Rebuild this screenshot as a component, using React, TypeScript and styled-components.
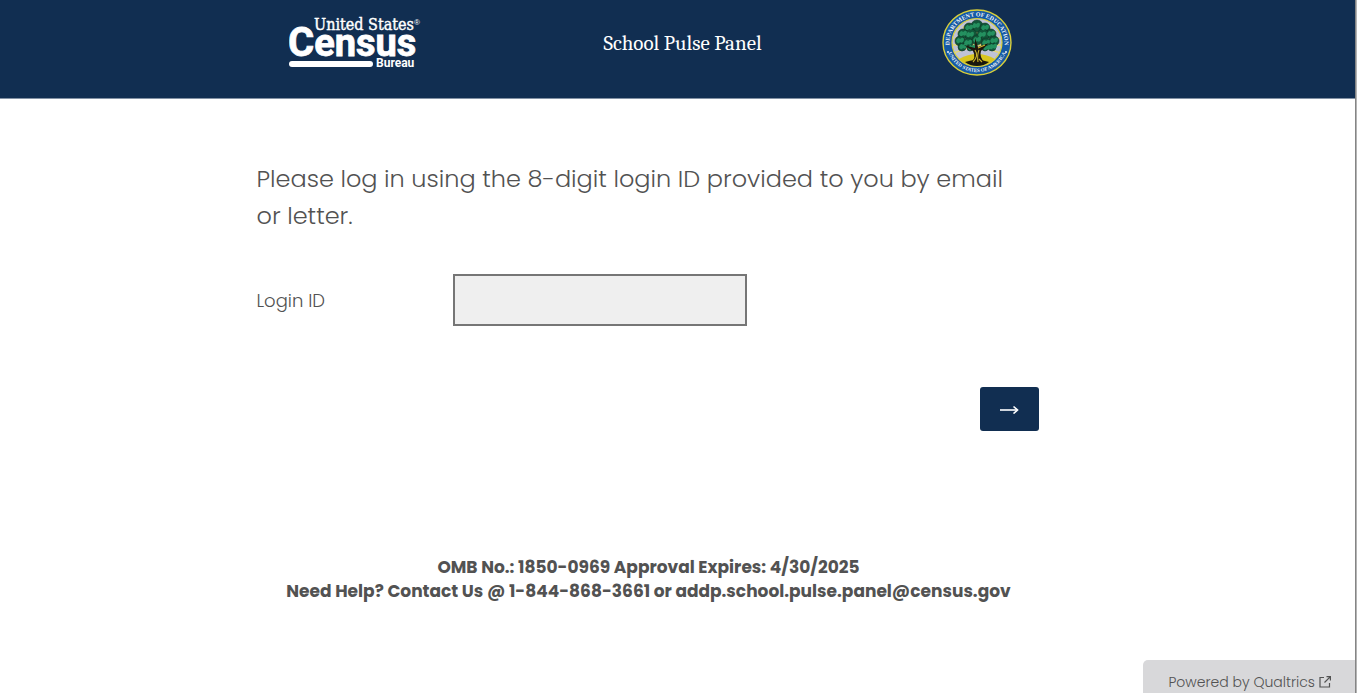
import React from "react";
import styled, { createGlobalStyle } from "styled-components";

const NAVY = "#112e51";
const INK = "#525252";

const GlobalStyle = createGlobalStyle`
  * { box-sizing: border-box; }
  body {
    margin: 0;
    background: #fff;
    color: ${INK};
    font-family: Poppins, Inter, "Open Sans", sans-serif;
    font-weight: 300;
  }
`;

const Page = styled.div`
  min-height: 100vh;
`;

const Header = styled.header`
  background: ${NAVY};
  border-bottom: 1px solid #8291a4;
  padding: 0 62px 0 0;
`;

const Column = styled.div`
  width: 100%;
  max-width: 782px;
  margin: 0 auto;
`;

const HeaderRow = styled(Column)`
  display: flex;
  justify-content: space-between;
  align-items: center;
  height: 98px;
  padding: 0 26px 12px 32px;
`;

const SiteTitle = styled.h1`
  margin: 0;
  color: #fff;
  font-family: Cambria, "Liberation Serif", serif;
  font-size: 21px;
  font-weight: 400;
  line-height: 24px;
`;

const Main = styled.main`
  padding: 61px 62px 0 0;
`;

const Question = styled.h2`
  margin: 0;
  padding-right: 24px;
  font-size: 24px;
  font-weight: 300;
  line-height: 37px;
`;

const Field = styled.div`
  display: flex;
  align-items: center;
  margin-top: 40px;
`;

const FieldLabel = styled.label`
  width: 196px;
  padding-top: 2px;
  font-size: 18px;
  line-height: 28px;
`;

const TextInput = styled.input`
  width: 294px;
  height: 52px;
  padding: 8px 12px;
  border: 2px solid #767676;
  border-radius: 0;
  background: #efefef;
  color: ${INK};
  font: inherit;
  font-size: 18px;
`;

const Actions = styled.div`
  display: flex;
  justify-content: flex-end;
  margin-top: 61px;
`;

const NextButton = styled.button`
  display: flex;
  align-items: center;
  justify-content: center;
  width: 59px;
  height: 44px;
  padding: 0;
  border: 0;
  border-radius: 3px;
  background: ${NAVY};
  color: #fff;
`;

const Contact = styled.footer`
  margin-top: 124px;
  padding: 0 0 80px 2px;
  text-align: center;
  font-size: 17px;
  font-weight: 700;
  line-height: 24px;

  p { margin: 0; }
`;

const PoweredBy = styled.a`
  position: fixed;
  right: 2px;
  bottom: 0;
  display: flex;
  align-items: center;
  gap: 4px;
  height: 33px;
  padding: 11px 24px 0 25px;
  border-top-left-radius: 5px;
  background: #d8d8da;
  color: ${INK};
  font-size: 14px;
  line-height: 20px;
  text-decoration: none;
`;

const EdgeBar = styled.div`
  position: fixed;
  top: 0;
  right: 0;
  bottom: 0;
  width: 2px;
  border-left: 1px solid #858585;
  background: #b4b4b4;
`;

function CensusLogo() {
  return (
    <svg width="134" height="56" viewBox="0 0 134 56" role="img" aria-label="United States Census Bureau" fill="#fff">
      <text x="25" y="15" fontFamily="DejaVu Serif Condensed, DejaVu Serif, serif" fontSize="16" stroke="#fff" strokeWidth="0.4">United States</text>
      <text x="125" y="10" fontFamily="Liberation Sans, sans-serif" fontSize="8">®</text>
      <text x="-1" y="41" fontFamily="Roboto, sans-serif" fontWeight="700" fontSize="38" stroke="#fff" strokeWidth="0.8">
        <tspan fontSize="40">C</tspan>ensus
      </text>
      <rect x="0" y="46" width="84" height="6" rx="3" />
      <text x="87" y="52" fontFamily="Roboto, sans-serif" fontWeight="700" fontSize="12">Bureau</text>
    </svg>
  );
}

const RAY_ANGLES = [0, 18, 36, 54, 72, 90, 108, 126, 144, 162, 180, 200, 340];

const LEAVES: [number, number, number][] = [
  [35, 17, 6], [27, 19, 5], [43, 19, 5], [21, 25, 5], [49, 25, 5],
  [29, 26, 6], [41, 26, 6], [18, 32, 5], [52, 32, 5], [26, 34, 5],
  [44, 34, 5], [35, 31, 5], [20, 38, 4], [50, 38, 4], [28, 39, 3], [43, 39, 3],
];

function EducationSeal() {
  return (
    <svg width="70" height="68" viewBox="0 0 70 68" role="img" aria-label="Department of Education, United States of America">
      <defs>
        <path id="sealTop" d="M8.5 41 A27.5 26.5 0 1 1 61.5 41" />
        <path id="sealBottom" d="M5.5 41 A30.5 29.5 0 0 0 64.5 41" />
      </defs>
      <ellipse cx="35" cy="33.5" rx="34" ry="32.5" fill="#1559a4" stroke="#d9cf3a" strokeWidth="1.4" />
      <ellipse cx="35" cy="33.5" rx="25" ry="24" fill="#bfc3d6" stroke="#d9cf3a" strokeWidth="1.2" />
      <g stroke="#e3d678" strokeWidth="1.6">
        {RAY_ANGLES.map((a) => {
          const t = (a * Math.PI) / 180;
          return <line key={a} x1="35" y1="36" x2={35 + 24 * Math.cos(t)} y2={36 - 23 * Math.sin(t)} />;
        })}
      </g>
      <path d="M17 50 Q35 40 53 50 Q46 57 35 57 Q24 57 17 50Z" fill="#d8c51e" />
      <path d="M23 53 Q35 49 47 53 Q42 57 35 57 Q28 57 23 53Z" fill="#18180e" />
      <g fill="#12573a" stroke="#0d3324" strokeWidth="0.6">
        {LEAVES.map(([x, y, r]) => <circle key={`${x}-${y}`} cx={x} cy={y} r={r} />)}
      </g>
      <g fill="#24905f">
        {LEAVES.map(([x, y, r]) => (
          <path key={`${x}-${y}`} d={`M${x - r + 1} ${y} q2 -5 4 -2 q4 -3 4 1 q-1 4 -4 2 q-2 3 -4 -1z`} />
        ))}
      </g>
      <path d="M28 54 Q35 49 31 42 L22 36 L33 39 L33 29 L36 38 L47 34 L39 42 Q37 48 43 54Z" fill="#1c160c" />
      <path d="M31 53 Q37 47 33 41 M36 53 Q35 46 37 41 M36 39 L43 36 M40 53 L37 50" fill="none" stroke="#cbb52a" strokeWidth="1.1" />
      <g fill="#eef2f8" fontFamily="Liberation Serif, serif" fontWeight="700">
        <text fontSize="6"><textPath href="#sealTop" startOffset="50%" textAnchor="middle">DEPARTMENT OF EDUCATION</textPath></text>
        <text fontSize="5"><textPath href="#sealBottom" startOffset="50%" textAnchor="middle">UNITED STATES OF AMERICA</textPath></text>
      </g>
      <circle cx="6" cy="43" r="1" fill="#eef2f8" />
      <circle cx="64" cy="43" r="1" fill="#eef2f8" />
    </svg>
  );
}

export default function App() {
  return (
    <Page>
      <GlobalStyle />
      <Header>
        <HeaderRow>
          <CensusLogo />
          <SiteTitle>School Pulse Panel</SiteTitle>
          <EducationSeal />
        </HeaderRow>
      </Header>
      <Main>
        <Column>
          <form onSubmit={(e) => e.preventDefault()}>
            <Question>Please log in using the 8-digit login ID provided to you by email or letter.</Question>
            <Field>
              <FieldLabel htmlFor="login-id">Login ID</FieldLabel>
              <TextInput id="login-id" type="text" />
            </Field>
            <Actions>
              <NextButton type="submit" aria-label="Next">
                <svg width="20" height="10" viewBox="0 0 20 10" fill="none" stroke="currentColor" strokeWidth="1.6">
                  <path d="M1 6H18" />
                  <path d="M14.5 2.5L18.5 6L14.5 9.5" />
                </svg>
              </NextButton>
            </Actions>
          </form>
          <Contact>
            <p>OMB No.: 1850-0969 Approval Expires: 4/30/2025</p>
            <p>Need Help? Contact Us @ 1-844-868-3661 or addp.school.pulse.panel@census.gov</p>
          </Contact>
        </Column>
      </Main>
      <PoweredBy href="#">
        Powered by Qualtrics
        <svg width="12" height="12" viewBox="0 0 12 12" fill="none" stroke="currentColor" strokeWidth="1.2">
          <path d="M5 1.5H1V11H10.5V7" />
          <path d="M7.5 0.6H11.4V4.5M11.4 0.6L5.5 6.5" />
        </svg>
      </PoweredBy>
      <EdgeBar />
    </Page>
  );
}
